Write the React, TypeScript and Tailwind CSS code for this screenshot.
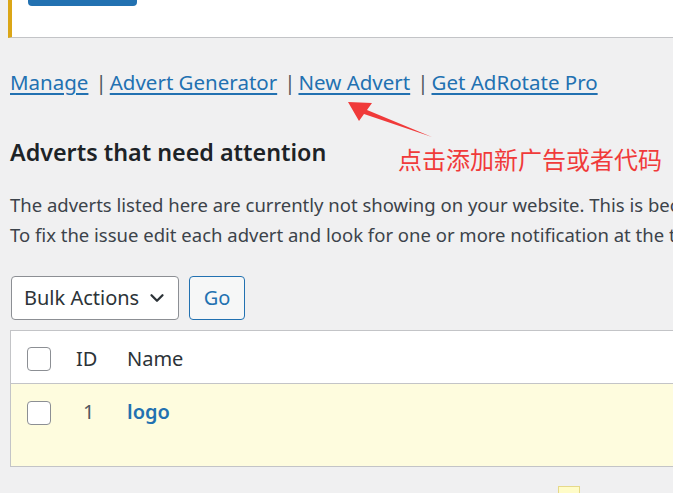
import { ChevronDown } from 'lucide-react';

function Checkbox() {
  return (
    <span className="block w-[24px] h-[24px] rounded-[4px] border border-[#8c8f94] bg-white" />
  );
}

export default function App() {
  const links = ['Manage', 'Advert Generator', 'New Advert', 'Get AdRotate Pro'];

  return (
    <div
      className="relative w-full h-[493px] overflow-hidden bg-[#f0f0f1] text-[#3c434a]"
      style={{ fontFamily: '"Noto Sans", "Noto Sans CJK SC", sans-serif' }}
    >
      {/* notice panel */}
      <div className="ml-[8px] h-[38px] bg-white border-l-4 border-[#dba617] border-b border-b-[#c3c4c7]">
        <div className="ml-[16px] w-[109px] h-[6px] rounded-b-[4px] bg-[#2271b1]" />
      </div>

      {/* sub navigation */}
      <div className="flex items-baseline pl-[10px] mt-[29px] text-[20.5px] leading-[30px]">
        {links.map((label, i) => (
          <span key={label} className="flex items-baseline">
            {i > 0 && <span className="pl-[7px] pr-[3px] text-[#50575e]">|</span>}
            <a className="text-[#2271b1] underline underline-offset-[3px] decoration-2">
              {label}
            </a>
          </span>
        ))}
      </div>

      <h2 className="pl-[10px] mt-[40px] text-[23.3px] leading-[30px] font-semibold text-[#1d2327]">
        Adverts that need attention
      </h2>

      <div className="pl-[10px] mt-[23px] text-[18.5px] leading-[30px] whitespace-nowrap">
        <p>The adverts listed here are currently not showing on your website. This is because of an error.</p>
        <p>To fix the issue edit each advert and look for one or more notification at the top of the page.</p>
      </div>

      {/* bulk actions */}
      <div className="flex gap-[10px] pl-[11px] mt-[26px]">
        <div className="flex items-center justify-between w-[168px] h-[44px] pl-[12px] pr-[10px] rounded-[4px] border border-[#8c8f94] bg-white text-[20px] text-[#2c3338]">
          <span>Bulk Actions</span>
          <ChevronDown size={22} strokeWidth={2.5} />
        </div>
        <div className="flex items-center justify-center w-[56px] h-[44px] rounded-[4px] border border-[#2271b1] bg-[#f6f7f7] text-[20px] text-[#2271b1]">
          Go
        </div>
      </div>

      {/* table */}
      <div className="ml-[10px] mt-[10px] border border-r-0 border-[#c3c4c7]">
        <div className="flex items-center h-[53px] pt-[3px] bg-white border-b border-[#c3c4c7] text-[20px] text-[#2c3338]">
          <div className="pl-[16px] w-[65px]">
            <Checkbox />
          </div>
          <div className="w-[51px]">ID</div>
          <div>Name</div>
        </div>
        <div className="flex h-[82px] pt-[17px] bg-[#fefcde] text-[20px]">
          <div className="pl-[16px] w-[65px]">
            <Checkbox />
          </div>
          <div className="w-[51px] pl-[7px] leading-[22px] text-[#50575e]">1</div>
          <div className="leading-[22px] font-semibold text-[#2271b1]">logo</div>
        </div>
      </div>

      <div className="ml-[558px] mt-[19px] w-[22px] h-[10px] border border-[#e6d98a] bg-[#fffcc8]" />

      {/* annotation */}
      <svg className="absolute left-0 top-0" width="673" height="493" viewBox="0 0 673 493">
        <path d="M348 102 L372 103 L367 110 L432 137 L364 114 L359 121 Z" fill="#f03a3a" />
      </svg>
      <div
        className="absolute left-[398px] top-[144px] text-[24px] leading-[30px] text-[#f03a3a]"
        style={{ fontFamily: '"Noto Sans CJK SC", sans-serif' }}
      >
        点击添加新广告或者代码
      </div>
    </div>
  );
}
